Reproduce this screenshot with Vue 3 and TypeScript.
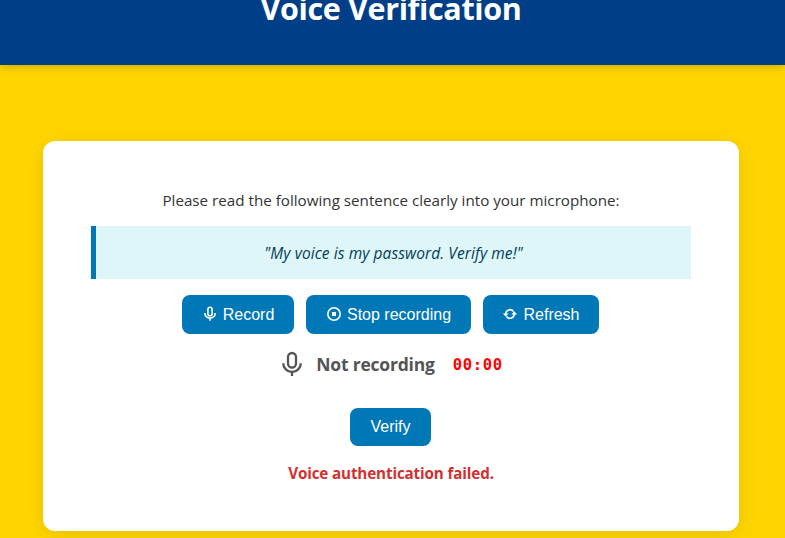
<script setup lang="ts">
import { ref } from 'vue'

const sentence = ref('"My voice is my password. Verify me!"')
const status = ref('Not recording')
const elapsed = ref('00:00')
const result = ref('Voice authentication failed.')
</script>

<template>
  <div class="page">
    <header class="header"><h1 class="title">Voice Verification</h1></header>
    <main class="card">
      <p class="intro">Please read the following sentence clearly into your microphone:</p>
      <blockquote class="quote">{{ sentence }}</blockquote>
      <div class="actions">
        <button class="btn record" type="button">
          <svg class="icon" viewBox="0 0 16 16" fill="none" stroke="currentColor" stroke-width="1.6">
            <rect x="5.9" y="1.2" width="4.2" height="8.6" rx="2.1" />
            <path d="M2.9 7v.5a5.1 4.6 0 0 0 10.2 0V7M8 12v2.7" />
          </svg>
          <span>Record</span>
        </button>
        <button class="btn stop" type="button">
          <svg class="icon" viewBox="0 0 16 16" fill="none" stroke="currentColor" stroke-width="1.6">
            <circle cx="8" cy="8" r="6.2" />
            <rect x="6" y="6" width="4" height="4" fill="currentColor" stroke="none" />
          </svg>
          <span>Stop recording</span>
        </button>
        <button class="btn refresh" type="button">
          <svg class="icon" viewBox="0 0 16 16" fill="none" stroke="currentColor" stroke-width="1.6">
            <path d="M3.7 8.6V8A4.3 4.3 0 0 1 11.5 5.5M12.3 7.4V8A4.3 4.3 0 0 1 4.5 10.5" />
            <path d="M.8 7.5h5.8L3.7 10.7zM9.4 8.5h5.8L12.3 5.3z" fill="currentColor" stroke="none" />
          </svg>
          <span>Refresh</span>
        </button>
      </div>
      <div class="status">
        <svg class="mic" viewBox="0 0 24 26" fill="none" stroke="currentColor" stroke-width="2.3">
          <rect x="8" y="2" width="8" height="14.5" rx="4" />
          <path d="M3.2 12.2a8.8 8.8 0 0 0 17.6 0M12 21v4" />
        </svg>
        <span class="state">{{ status }}</span>
        <span class="time">{{ elapsed }}</span>
      </div>
      <button class="btn verify" type="button">Verify</button>
      <p class="result">{{ result }}</p>
    </main>
  </div>
</template>

<style>
body {
  background: #ffd500;
  overflow: hidden;
}
</style>

<style scoped>
.page {
  height: 538px;
  overflow: hidden;
  background: #ffd500;
  font-family: "Open Sans", "Noto Sans", sans-serif;
}
.header {
  height: 65px;
  box-sizing: border-box;
  padding-right: 3px;
  background: #003f87;
  box-shadow: 0 2px 8px rgba(0, 0, 0, 0.2);
  text-align: center;
}
.title {
  margin: 0;
  color: #fff;
  font-size: 30.5px;
  font-weight: 700;
  line-height: 16px;
  white-space: nowrap;
  letter-spacing: -0.35px;
}
.card {
  display: flex;
  flex-direction: column;
  align-items: center;
  box-sizing: border-box;
  width: 696px;
  height: 390px;
  margin: 76px 0 0 43px;
  padding: 48px;
  border-radius: 12px;
  background: #fff;
  box-shadow: 0 4px 20px rgba(0, 0, 0, 0.1);
}
.intro {
  margin: 0 0 14px;
  color: #333;
  font-size: 15.2px;
  line-height: 23px;
  white-space: nowrap;
}
.quote {
  box-sizing: border-box;
  width: 600px;
  height: 53px;
  margin: 0 0 16px;
  border-left: 5px solid #0077b6;
  background: #dff6f9;
  color: #023e58;
  font-size: 15.5px;
  font-style: italic;
  line-height: 55px;
  text-align: center;
  letter-spacing: 0.09px;
}
.actions {
  display: flex;
  gap: 12px;
  margin-right: 1px;
}
.btn {
  display: flex;
  flex-shrink: 0;
  align-items: center;
  justify-content: center;
  gap: 5px;
  height: 39px;
  padding: 0;
  border: 0;
  border-radius: 8px;
  background: #0077b6;
  color: #fff;
  font: 16px "Liberation Sans", Arial, sans-serif;
  white-space: nowrap;
}
.record { width: 112px; }
.stop { width: 165px; }
.refresh { width: 116px; }
.icon {
  width: 16px;
  height: 16px;
  margin-top: -2px;
}
.status {
  display: flex;
  flex-shrink: 0;
  align-items: center;
  height: 32px;
  margin: 14px 0 28px 1px;
  color: #555;
}
.mic {
  width: 24px;
  height: 26px;
  margin-right: 12px;
}
.state {
  font-size: 17.5px;
  font-weight: 700;
  line-height: 32px;
  letter-spacing: -0.2px;
}
.time {
  margin-left: 18px;
  padding-top: 2px;
  color: #f00;
  font: 700 15.5px/32px "DejaVu Sans Mono", "Liberation Mono", monospace;
  letter-spacing: 0.67px;
}
.verify {
  width: 81px;
  height: 38px;
  margin-right: 1px;
}
.result {
  margin: 15px 0 0;
  color: #d32f2f;
  font-size: 15.2px;
  font-weight: 700;
  line-height: 24px;
  letter-spacing: -0.13px;
}
</style>
